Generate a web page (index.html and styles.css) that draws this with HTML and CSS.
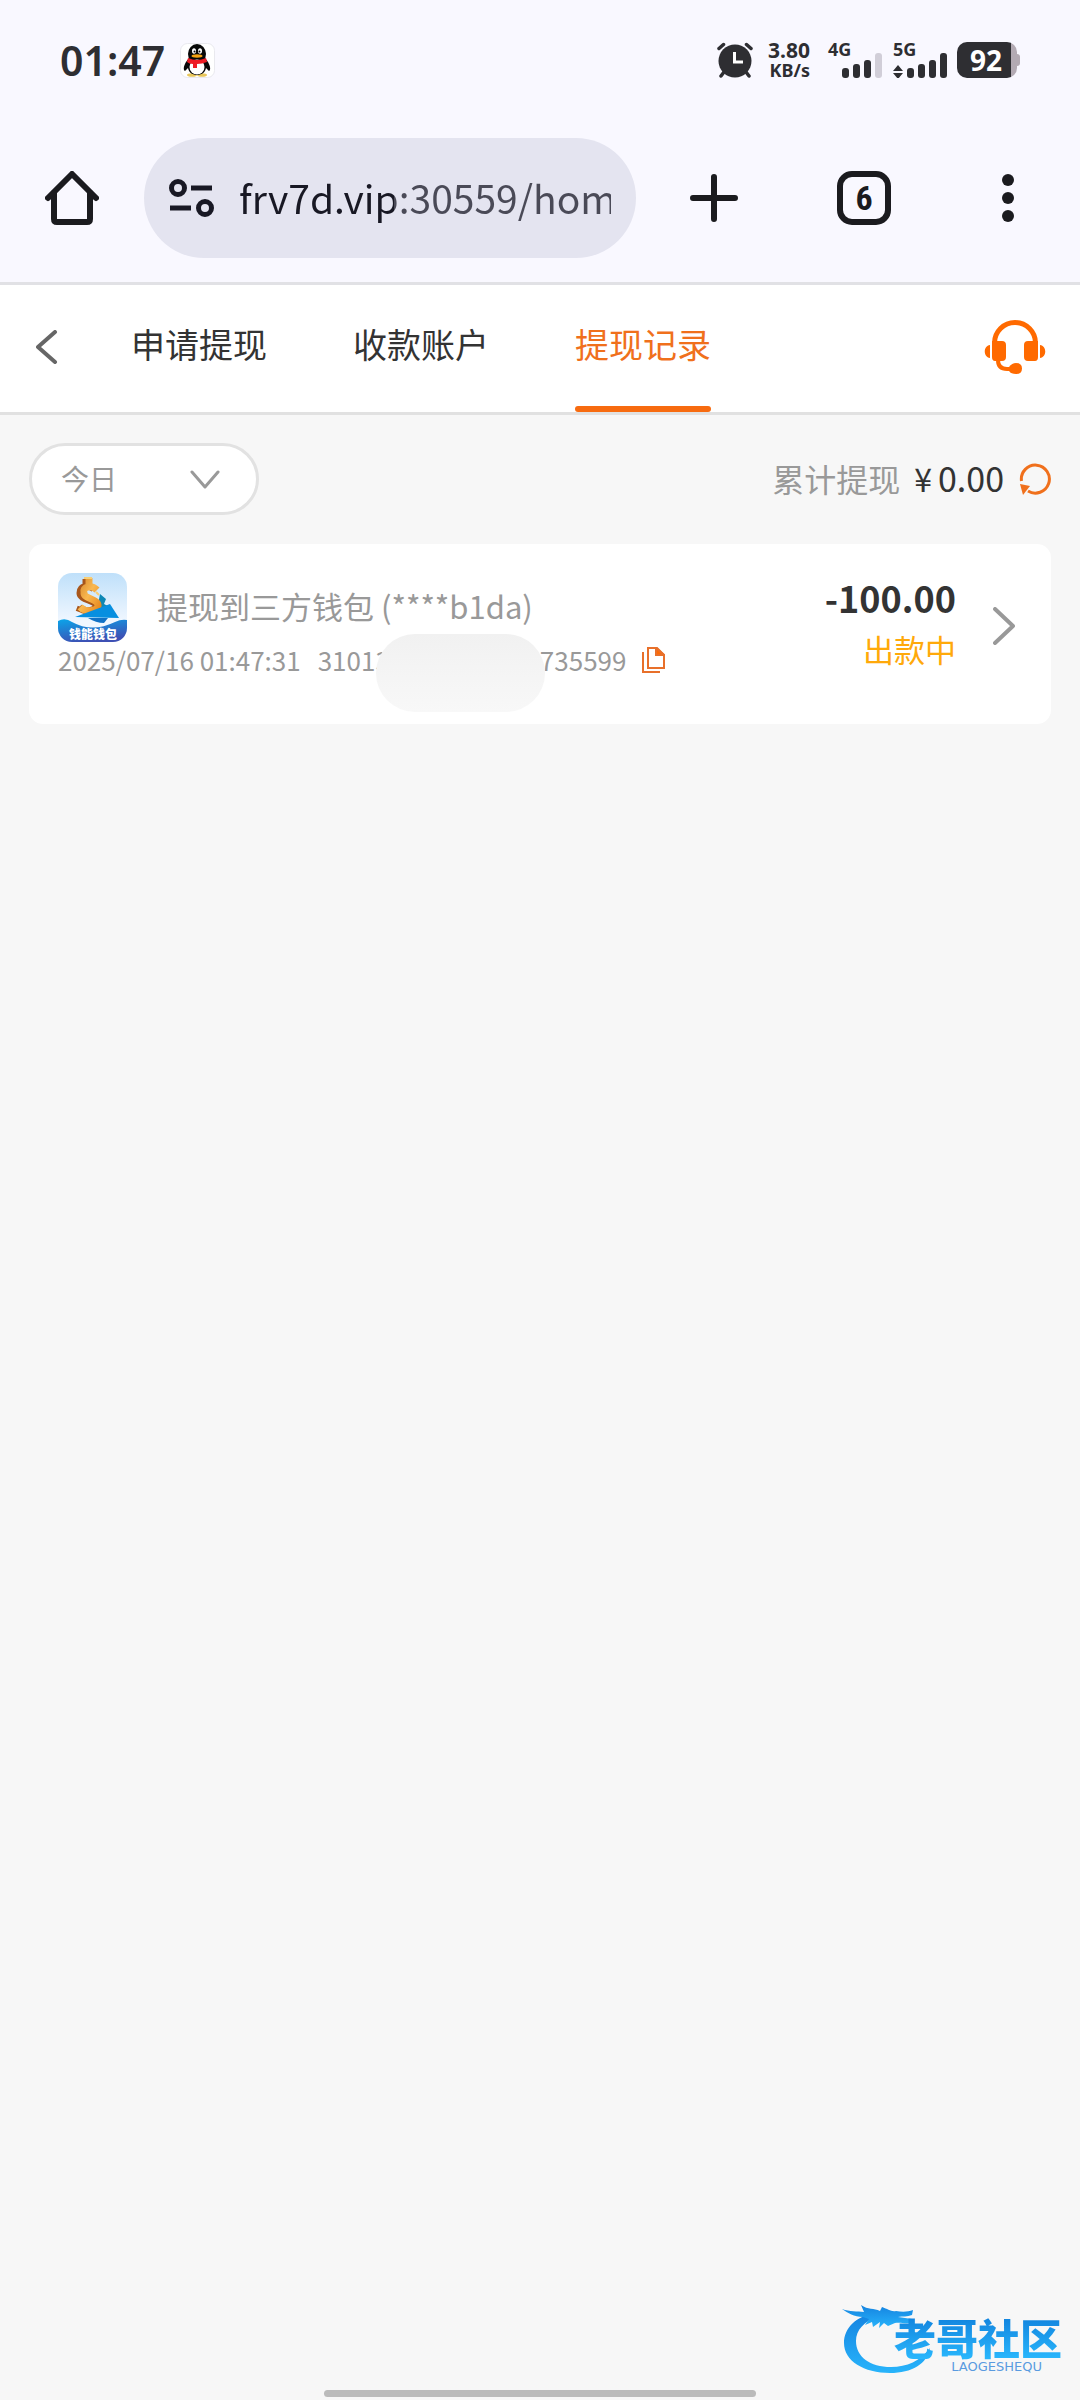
FILE: index.html
```html
<!DOCTYPE html>
<html lang="zh-CN">
<head>
<meta charset="UTF-8">
<meta name="viewport" content="width=device-width, initial-scale=1.0">
<title>提现记录</title>
<link rel="stylesheet" href="styles.css">
</head>
<body>

<div class="statusbar">
    <span class="time">01:47</span>
    <svg class="qq" viewBox="0 0 35 35" width="35" height="35">
        <rect x=".5" y=".5" width="34" height="34" rx="7" fill="#fff" stroke="#e9e9ee"/>
        <ellipse cx="12" cy="32" rx="5" ry="1.8" fill="#e8c65a"/>
        <ellipse cx="22" cy="32" rx="5" ry="1.8" fill="#e8c65a"/>
        <path d="M9 15C3 22 3 27 5 28l3-3c1 5 5 7 9 7s8-2 9-7l3 3c2-1 2-6-4-13z" fill="#080808"/>
        <ellipse cx="17" cy="11" rx="9" ry="10" fill="#080808"/>
        <ellipse cx="17" cy="24" rx="7.500" ry="7.500" fill="#fff"/>
        <ellipse cx="14" cy="8" rx="2" ry="2.800" fill="#fff"/>
        <ellipse cx="20" cy="8" rx="2" ry="2.800" fill="#fff"/>
        <circle cx="14.500" cy="8.500" r="1" fill="#080808"/>
        <circle cx="19.500" cy="8.500" r="1" fill="#080808"/>
        <ellipse cx="17" cy="13" rx="5.500" ry="1.700" fill="#f5a313"/>
        <path d="M8 15q9 4 18 0l1 4q-5 2-10 2v4h-4v-4q-4 0-6-2z" fill="#ee1c25"/>
    </svg>
    <div class="indicators">
        <svg viewBox="0 0 36 36" width="36" height="36">
            <g stroke="#2e2e32" stroke-width="3.500" stroke-linecap="round" fill="none">
                <path d="M2 6.500L6.500 2.500M34 6.500L29.500 2.500M7 30L4 34M29 30L32 34"/>
            </g>
            <circle cx="18" cy="19" r="16.500" fill="#2e2e32"/>
            <path d="M17.500 10v10H26" fill="none" stroke="#fff" stroke-width="3"/>
        </svg>
        <div class="speed"><span>3.80</span><span class="unit">KB/s</span></div>
        <div class="signal">
            <span>4G</span>
            <svg viewBox="0 0 40 25" width="40" height="25" fill="#2e2e32">
                <rect x="0" y="15" width="7" height="10" rx="3"/>
                <rect x="11" y="11" width="7" height="14" rx="3"/>
                <rect x="22" y="7" width="7" height="18" rx="3"/>
                <rect x="33" y="0" width="7" height="25" rx="3" fill="#d1ced8"/>
            </svg>
        </div>
        <div class="signal">
            <span>5G</span>
            <svg viewBox="0 0 54 25" width="54" height="25" fill="#2e2e32">
                <path d="M0 18l5-6 5 6zM0 20h10l-5 6z"/>
                <rect x="14" y="15" width="7" height="10" rx="3"/>
                <rect x="25" y="11" width="7" height="14" rx="3"/>
                <rect x="36" y="7" width="7" height="18" rx="3"/>
                <rect x="47" y="0" width="7" height="25" rx="3"/>
            </svg>
        </div>
        <div class="battery"><span>92</span></div>
    </div>
</div>

<div class="toolbar">
    <button class="icon-btn" aria-label="主页">
        <svg viewBox="0 0 54 54" width="54" height="54" fill="none" stroke="#1b1b1f" stroke-width="6" stroke-linecap="round" stroke-linejoin="round">
            <path d="M3 27L27 3l24 24"/>
            <path d="M9 22v26q0 3 3 3h30q3 0 3-3V22"/>
        </svg>
    </button>
    <div class="omnibox">
        <svg viewBox="0 0 46 38" width="46" height="38" fill="none" stroke="#181824" stroke-width="5">
            <circle cx="9" cy="9" r="6.500"/>
            <path d="M22 9h21M1 29h21"/>
            <circle cx="36" cy="29" r="6.500"/>
        </svg>
        <input class="url" type="text" aria-label="网址" value="frv7d.vip:30559/home">
    </div>
    <div class="actions">
        <button class="icon-btn" aria-label="新标签页">
            <svg viewBox="0 0 48 48" width="48" height="48" stroke="#1b1b1f" stroke-width="6" stroke-linecap="round">
                <path d="M3 24h42M24 3v42"/>
            </svg>
        </button>
        <button class="tab-count" aria-label="标签页">6</button>
        <button class="icon-btn" aria-label="更多">
            <svg viewBox="0 0 12 48" width="12" height="48" fill="#1b1b1f">
                <circle cx="6" cy="6" r="6"/><circle cx="6" cy="24" r="6"/><circle cx="6" cy="42" r="6"/>
            </svg>
        </button>
    </div>
</div>

<div class="header">
    <button class="icon-btn" aria-label="返回">
        <svg viewBox="0 0 22 34" width="22" height="34" fill="none" stroke="#666" stroke-width="4" stroke-linecap="round" stroke-linejoin="round">
            <path d="M19 2L2 17l17 15"/>
        </svg>
    </button>
    <nav class="tabs">
        <a href="#apply">申请提现</a>
        <a href="#account">收款账户</a>
        <a href="#record" class="active">提现记录</a>
    </nav>
    <button class="icon-btn service" aria-label="客服">
        <svg viewBox="0 0 62 54" width="62" height="54" fill="#ff6a00">
            <path d="M10.500 26V23a20.500 20.500 0 0 1 41 0v3" fill="none" stroke="#ff6a00" stroke-width="5"/>
            <path d="M8 21h10q4 0 4 4v12q0 4-4 4h-7q-3 0-3-4zM54 21v16q0 4-3 4h-7q-4 0-4-4V25q0-4 4-4z"/>
            <path d="M6 25v13C-1 37-1 26 6 25zM56 25v13c7-1 7-12 0-13z"/>
            <path d="M14 40q0 9 9 9h5" fill="none" stroke="#ff6a00" stroke-width="4"/>
            <path d="M25 47q3-4 7-4 6 0 6 5.500T32 54q-5 0-7-3z"/>
        </svg>
    </button>
</div>

<main class="content">
    <div class="filter">
        <div class="select-wrap">
            <select class="period" aria-label="日期">
                <option>今日</option>
                <option>昨日</option>
            </select>
            <svg class="arrow" viewBox="0 0 30 20" width="30" height="20" fill="none" stroke="#999" stroke-width="3" stroke-linecap="round" stroke-linejoin="round">
                <path d="M2 2l13 15L28 2"/>
            </svg>
        </div>
        <div class="total">
            <span class="label">累计提现</span>
            <span class="money"><span class="yen">¥</span>0.00</span>
            <button class="icon-btn" aria-label="刷新">
                <svg viewBox="0 0 32 32" width="32" height="32">
                    <path d="M2.500 18A14 14 0 1 1 9 28" fill="none" stroke="#f0701c" stroke-width="3"/>
                    <path d="M1 21l10 2-7 9z" fill="#f0701c"/>
                </svg>
            </button>
        </div>
    </div>

    <div class="card">
        <div class="info">
            <div class="title">
                <svg class="wallet" viewBox="0 0 69 69" width="69" height="69">
                    <defs>
                        <linearGradient id="sky" x1="0" y1="0" x2="0" y2="1"><stop offset="0" stop-color="#bfe0fa"/><stop offset=".7" stop-color="#f0f7ff"/></linearGradient>
                        <linearGradient id="sea" x1="0" y1="0" x2=".4" y2="1"><stop offset="0" stop-color="#0aa5ea"/><stop offset="1" stop-color="#3d50b4"/></linearGradient>
                        <linearGradient id="gold" x1="0" y1="0" x2="1" y2="1"><stop offset="0" stop-color="#d98a2c"/><stop offset=".5" stop-color="#f9b850"/><stop offset="1" stop-color="#e88a20"/></linearGradient>
                        <clipPath id="tile"><rect width="69" height="69" rx="14"/></clipPath>
                    </defs>
                    <g clip-path="url(#tile)">
                        <rect width="69" height="69" fill="url(#sky)"/>
                        <path d="M42 21l6 5-2 5 6 3-14 8z" fill="#0e88b5"/>
                        <path d="M36 16C31 11 22 13 22 20c0 7 16 7 16 13 0 5-12 7-17 1M28 11V6M23 34l-2 5" fill="none" stroke="#a8561a" stroke-width="7"/>
                        <path d="M39 17C33 11 24 14 26 20c0 6 15 6 14 13-1 5-12 7-18 1M31 12V5" fill="none" stroke="url(#gold)" stroke-width="7"/>
                        <path d="M26 5h8M38 19l3 3" stroke="#f9cf75" stroke-width="2"/>
                        <path d="M17 44L52 31l9 14z" fill="#078fe0"/>
                        <path d="M30 45h20l-4 5q-8 0-16-5z" fill="#1172c6"/>
                        <path d="M0 48q7-4 14 1 20 11 43 0 6-3 12-2v22H0z" fill="url(#sea)"/>
                        <text class="wallet-name" x="35" y="66" text-anchor="middle">钱能钱包</text>
                    </g>
                </svg>
                <span class="name">提现到三方钱包 (****b1da)</span>
            </div>
            <div class="meta">
                <span>2025/07/16 01:47:31</span>
                <span class="order">
                    <span>31013</span>
                    <span class="mask"></span>
                    <span>735599</span>
                </span>
                <button class="icon-btn" aria-label="复制">
                    <svg viewBox="0 0 23 26" width="23" height="26" fill="none" stroke="#e8702a" stroke-width="2">
                        <path d="M6 1h9l7 7v13H6z"/>
                        <path d="M1 5v20h17"/>
                        <path d="M14 1l8 7h-8z" fill="#ff6a00"/>
                    </svg>
                </button>
            </div>
        </div>
        <div class="result">
            <span class="amount">-100.00</span>
            <span class="state">出款中</span>
        </div>
        <svg class="more" viewBox="0 0 22 38" width="22" height="38" fill="none" stroke="#999" stroke-width="4" stroke-linecap="round" stroke-linejoin="round">
            <path d="M2 2l18 17L2 36"/>
        </svg>
    </div>
</main>

<div class="watermark">
    <svg viewBox="0 0 90 72" width="90" height="72">
        <defs>
            <linearGradient id="dragon" x1="0" y1="0" x2="0" y2="1"><stop offset="0" stop-color="#1583e0"/><stop offset="1" stop-color="#28b4fb"/></linearGradient>
        </defs>
        <g fill="url(#dragon)">
            <path d="M34 9C14 12 2 24 2 39c0 18 20 30 46 30 22 0 37-9 40-25C78 57 65 63 49 63 28 63 14 53 14 37c0-11 8-19 21-25z"/>
            <path d="M0 5c8 3 15 2 22 3L19 1c7 5 13 3 19 6l2-4c6 2 9 5 14 4 6 1 12 1 17-1l-1 5c-5 2-9 1-14 2l14 2-1 4c-6 1-11-1-16 0l-7 3-4-3-5 5 1-6-7 5-1-5-7 3 4-6-6-2C12 13 6 9 0 5z"/>
        </g>
    </svg>
    <div class="brand">
        <span class="brand-name">老哥社区</span>
        <span class="brand-en">LAOGESHEQU</span>
    </div>
</div>
<div class="home-indicator"></div>

</body>
</html>
```
FILE: styles.css
```css
* {
    box-sizing: border-box;
}
body {
    font-family: "Noto Sans CJK SC", sans-serif;
    margin: 0;
    min-height: 100vh;
    position: relative;
    background-color: #f7f7f7;
    color: #333;
}
svg {
    display: block;
    flex-shrink: 0;
}
button {
    font-family: inherit;
    padding: 0;
    border: none;
    background: none;
    cursor: pointer;
}
.icon-btn {
    display: flex;
    flex-shrink: 0;
}

/* Status bar */
.statusbar {
    display: flex;
    align-items: center;
    height: 120px;
    padding: 0 60px;
    background-color: #f9f8ff;
    color: #2e2e32;
}
.time {
    font-family: "Noto Sans", sans-serif;
    font-size: 41px;
    font-weight: 600;
    line-height: 48px;
}
.qq {
    margin-left: 15px;
}
.indicators {
    display: flex;
    align-items: center;
    margin-left: auto;
}
.speed {
    display: flex;
    flex-direction: column;
    align-items: flex-end;
    margin: 0 18px 0 15px;
    font-family: "Noto Sans", sans-serif;
    font-size: 21px;
    font-weight: 700;
    line-height: 20px;
}
.unit {
    font-size: 18px;
}
.signal {
    position: relative;
    display: flex;
    align-items: flex-end;
    height: 36px;
    padding-left: 14px;
    margin-right: 11px;
}
.signal + .signal {
    padding-left: 0;
    margin-right: 10px;
}
.signal span {
    position: absolute;
    top: 0;
    left: 0;
    font-family: "Noto Sans", sans-serif;
    font-size: 18px;
    font-weight: 700;
    line-height: 14px;
}
.battery {
    display: flex;
    align-items: center;
    justify-content: center;
    position: relative;
    width: 60px;
    height: 36px;
    padding-right: 2px;
    margin-right: 3px;
    border-radius: 10px;
    background: linear-gradient(90deg, #2e2e32 54px, #b3aab3 54px);
    color: #fff;
    font-family: "Noto Sans", sans-serif;
    font-size: 28px;
    font-weight: 700;
    line-height: 36px;
}
.battery::after {
    content: "";
    position: absolute;
    top: 12px;
    right: -3px;
    width: 3px;
    height: 12px;
    border-radius: 0 3px 3px 0;
    background-color: #b3aab3;
}

/* Browser toolbar */
.toolbar {
    display: flex;
    align-items: center;
    height: 165px;
    padding: 0 66px 6px 45px;
    border-bottom: 3px solid #e1e1e5;
    background-color: #f9f8ff;
}
.omnibox {
    display: flex;
    flex: 1;
    align-items: center;
    min-width: 0;
    height: 120px;
    padding: 0 25px;
    margin: 0 54px 0 45px;
    border-radius: 60px;
    background-color: #e4e4f0;
}
.url {
    flex: 1;
    min-width: 0;
    padding: 0 0 2px;
    margin-left: 24px;
    border: none;
    /* host is darker than the rest of the address */
    background: linear-gradient(90deg, #181824 155px, #4a4a57 155px);
    -webkit-background-clip: text;
    background-clip: text;
    color: transparent;
    font-family: inherit;
    font-size: 39px;
    line-height: 56px;
    outline: none;
}
.actions {
    display: flex;
    align-items: center;
    gap: 99px;
}
.tab-count {
    width: 54px;
    height: 54px;
    border: 6px solid #1b1b1f;
    border-radius: 15px;
    color: #1b1b1f;
    font-family: "Roboto Condensed", "Liberation Sans Narrow", "Roboto", sans-serif;
    font-size: 34px;
    font-weight: 700;
    line-height: 42px;
}
.actions .icon-btn:last-child {
    margin-left: 12px;
}

/* Page header */
.header {
    display: flex;
    align-items: center;
    height: 130px;
    padding: 0 34px 0 36px;
    border-bottom: 3px solid #e1e1e1;
    background-color: #fff;
}
.header > .icon-btn {
    margin-bottom: 3px;
}
.tabs {
    display: flex;
    gap: 86px;
    height: 100%;
    margin-left: 73px;
}
.tabs a {
    padding-top: 34px;
    color: #333;
    font-size: 34px;
    line-height: 50px;
    text-decoration: none;
}
.tabs a.active {
    position: relative;
    color: #f0701c;
}
.tabs a.active::after {
    content: "";
    position: absolute;
    right: 0;
    bottom: 0;
    left: 0;
    height: 6px;
    border-radius: 3px;
    background-color: #f76b10;
}
.service {
    margin-left: auto;
}

/* Records */
.content {
    padding: 28px 29px;
}
.filter {
    display: flex;
    align-items: center;
    justify-content: space-between;
    margin-bottom: 29px;
}
.select-wrap {
    position: relative;
    width: 230px;
}
.period {
    appearance: none;
    display: block;
    width: 100%;
    height: 72px;
    padding: 0 29px 2px;
    border: 3px solid #e2e2e2;
    border-radius: 36px;
    background-color: #fff;
    color: #999;
    font-family: inherit;
    font-size: 28px;
}
.arrow {
    position: absolute;
    top: 27px;
    right: 39px;
    pointer-events: none;
}
.total {
    display: flex;
    align-items: center;
    font-size: 32px;
    line-height: 48px;
}
.label,
.money {
    padding-bottom: 3px;
}
.label {
    color: #999;
}
.money {
    margin: 0 15px 0 14px;
    font-size: 34px;
}
.yen {
    margin-right: 6px;
    font-size: 32px;
}
.card {
    display: flex;
    align-items: center;
    padding: 29px 36px 29px 29px;
    border-radius: 14px;
    background-color: #fff;
}
.info {
    flex: 1;
    align-self: flex-start;
    color: #999;
}
.title {
    display: flex;
    align-items: center;
    gap: 30px;
    font-size: 31px;
    line-height: 48px;
}
.name {
    padding-bottom: 4px;
}
.wallet-name {
    fill: #fff;
    font-size: 12px;
    font-weight: 900;
}
.meta {
    display: flex;
    align-items: center;
    height: 53px;
    padding-bottom: 17px;
    font-size: 26px;
    line-height: 38px;
}
.order {
    display: flex;
    position: relative;
    gap: 150px;
    margin: 0 16px 0 17px;
}
.mask {
    position: absolute;
    top: -7px;
    left: 58px;
    width: 169px;
    height: 78px;
    border-radius: 39px;
    background: linear-gradient(#f1f1f1, #f8f8f8);
}
.result {
    display: flex;
    flex-direction: column;
    align-items: flex-end;
    padding-bottom: 18px;
}
.amount {
    font-size: 36px;
    font-weight: 700;
    line-height: 48px;
}
.state {
    color: #ffa90a;
    font-size: 31px;
    line-height: 56px;
}
.more {
    margin: 0 0 16px 37px;
}

/* Overlays at the bottom of the screen */
.watermark {
    display: flex;
    position: absolute;
    right: 18px;
    bottom: 24px;
}
.brand {
    display: flex;
    flex-direction: column;
    margin: 10px 0 0 -38px;
}
.brand-name {
    background: linear-gradient(#1080dc, #2ab8fd);
    -webkit-background-clip: text;
    background-clip: text;
    color: transparent;
    font-size: 42px;
    font-weight: 900;
    line-height: 46px;
}
.brand-en {
    padding-right: 20px;
    color: #5a9be0;
    font-family: "DejaVu Sans", sans-serif;
    font-size: 13px;
    line-height: 14px;
    text-align: right;
}
.home-indicator {
    position: absolute;
    bottom: 3px;
    left: 50%;
    width: 40%;
    height: 7px;
    border-radius: 4px;
    background-color: #bbb;
    transform: translateX(-50%);
}
```
